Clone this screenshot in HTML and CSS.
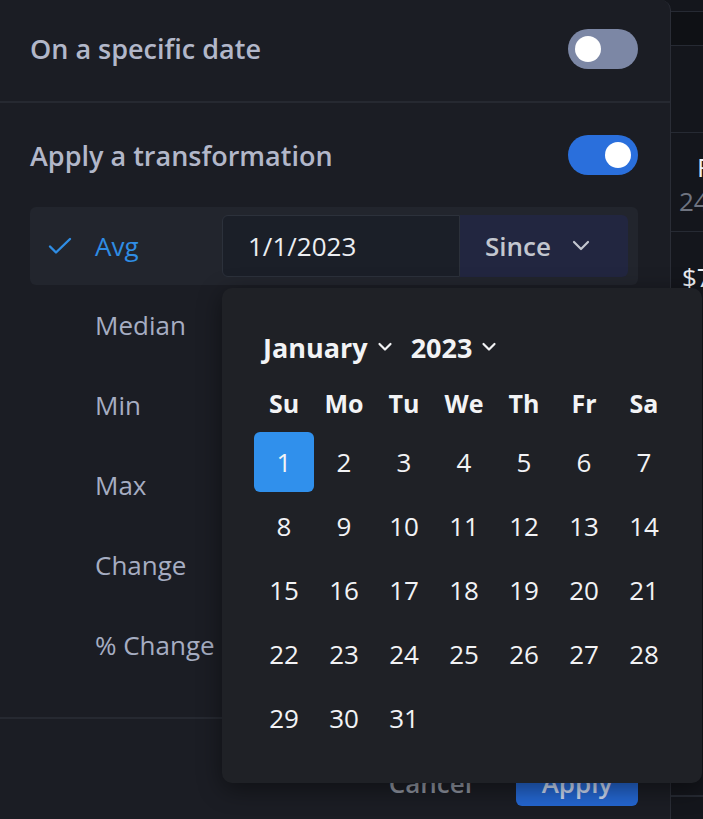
FILE: index.html
```html
<!DOCTYPE html>
<html lang="en">

<head>
    <meta charset="UTF-8">
    <meta name="viewport" content="width=device-width, initial-scale=1.0">
    <title>Metric settings</title>
    <link rel="stylesheet" href="styles.css">
</head>

<body>
    <div class="screen">
        <div class="panel">
            <div class="panel-head">
                <span class="label">On a specific date</span>
                <span class="toggle"><span class="knob"></span></span>
            </div>

            <div class="panel-body">
                <div class="body-title">
                    <span class="label">Apply a transformation</span>
                    <span class="toggle on"><span class="knob"></span></span>
                </div>

                <div class="agg-list">
                    <div class="agg active">
                        <span class="check">
                            <svg width="24" height="20" viewBox="0 0 24 20" fill="none">
                                <path d="M2 10.5 L8 16.5 L22 3" stroke="#2f8de4" stroke-width="2.4"
                                    stroke-linecap="round" stroke-linejoin="round" />
                            </svg>
                        </span>
                        <span class="agg-name">Avg</span>
                        <div class="date-field">
                            <span class="date-input">1/1/2023</span>
                            <span class="date-mode">Since
                                <svg width="20" height="12" viewBox="0 0 20 12" fill="none">
                                    <path d="M3 2 L10 9 L17 2" stroke="#c3c6cf" stroke-width="2.2"
                                        stroke-linecap="round" stroke-linejoin="round" />
                                </svg>
                            </span>
                        </div>
                    </div>
                    <div class="agg"><span class="agg-name">Median</span></div>
                    <div class="agg"><span class="agg-name">Min</span></div>
                    <div class="agg"><span class="agg-name">Max</span></div>
                    <div class="agg"><span class="agg-name">Change</span></div>
                    <div class="agg"><span class="agg-name">% Change</span></div>
                </div>
            </div>

            <div class="panel-foot">
                <button class="btn-cancel">Cancel</button>
                <button class="btn-apply">Apply</button>
            </div>
        </div>

        <div class="side">
            <div class="side-row top"></div>
            <div class="side-row band"></div>
            <div class="side-row gap"></div>
            <div class="side-row cell">
                <span class="side-title">F</span>
                <span class="side-sub">24</span>
            </div>
            <div class="side-row cell tall">
                <span class="side-title">$7</span>
            </div>
            <div class="side-row"></div>
        </div>

        <div class="calendar">
            <div class="cal-head">
                <span class="cal-pick">January
                    <svg width="16" height="10" viewBox="0 0 16 10" fill="none">
                        <path d="M2.5 2 L8 7.5 L13.5 2" stroke="#f2f3f5" stroke-width="2.2"
                            stroke-linecap="round" stroke-linejoin="round" />
                    </svg>
                </span>
                <span class="cal-pick">2023
                    <svg width="16" height="10" viewBox="0 0 16 10" fill="none">
                        <path d="M2.5 2 L8 7.5 L13.5 2" stroke="#f2f3f5" stroke-width="2.2"
                            stroke-linecap="round" stroke-linejoin="round" />
                    </svg>
                </span>
            </div>
            <div class="cal-week">
                <span>Su</span><span>Mo</span><span>Tu</span><span>We</span><span>Th</span><span>Fr</span><span>Sa</span>
            </div>
            <div class="cal-days">
                <span class="day selected">1</span><span class="day">2</span><span class="day">3</span><span class="day">4</span><span class="day">5</span><span class="day">6</span><span class="day">7</span>
                <span class="day">8</span><span class="day">9</span><span class="day">10</span><span class="day">11</span><span class="day">12</span><span class="day">13</span><span class="day">14</span>
                <span class="day">15</span><span class="day">16</span><span class="day">17</span><span class="day">18</span><span class="day">19</span><span class="day">20</span><span class="day">21</span>
                <span class="day">22</span><span class="day">23</span><span class="day">24</span><span class="day">25</span><span class="day">26</span><span class="day">27</span><span class="day">28</span>
                <span class="day">29</span><span class="day">30</span><span class="day">31</span>
            </div>
        </div>
    </div>
</body>

</html>
```

FILE: styles.css
```css
* {
    box-sizing: border-box;
}

body {
    margin: 0;
    background-color: #14161c;
    font-family: "Open Sans", "Noto Sans", sans-serif;
    overflow: hidden;
}

.screen {
    position: relative;
    display: flex;
    width: 703px;
    height: 819px;
    overflow: hidden;
}

/* left settings panel */

.panel {
    width: 671px;
    flex-shrink: 0;
    background-color: #1b1d24;
    border-right: 1px solid #2a2d36;
    border-top-right-radius: 10px;
    display: flex;
    flex-direction: column;
}

.label {
    color: #b2b7c9;
    font-size: 27px;
    font-weight: 600;
}

.panel-head {
    height: 103px;
    padding: 29px 32px 0 30px;
    display: flex;
    justify-content: space-between;
    align-items: flex-start;
    border-bottom: 2px solid #262931;
}

.panel-head .label {
    line-height: 40px;
}

.panel-body {
    padding: 32px 32px 32px 30px;
    border-bottom: 2px solid #262931;
}

.body-title {
    display: flex;
    justify-content: space-between;
    align-items: center;
    height: 40px;
    margin-bottom: 32px;
}

.toggle {
    position: relative;
    width: 70px;
    height: 40px;
    border-radius: 20px;
    background-color: #7c87a5;
}

.toggle .knob {
    position: absolute;
    top: 7px;
    left: 7px;
    width: 26px;
    height: 26px;
    border-radius: 50%;
    background-color: white;
}

.toggle.on {
    background-color: #2a6fdc;
}

.toggle.on .knob {
    left: auto;
    right: 7px;
}

.agg {
    height: 80px;
    display: flex;
    align-items: center;
    padding-left: 65px;
}

.agg-name {
    color: #a6adc2;
    font-size: 26px;
}

.agg.active {
    height: 78px;
    padding: 0 10px 0 18px;
    background-color: #22252d;
    border-radius: 6px;
}

.agg.active .agg-name {
    color: #2f8de4;
    width: 127px;
}

.check {
    display: flex;
    width: 47px;
}

.date-field {
    display: flex;
    height: 62px;
    flex: 1;
}

.date-input {
    width: 238px;
    display: flex;
    align-items: center;
    padding-left: 25px;
    background-color: #1b1f28;
    border: 1px solid #2c313b;
    border-radius: 6px 0 0 6px;
    color: #eceef2;
    font-size: 26px;
}

.date-mode {
    flex: 1;
    display: flex;
    align-items: center;
    gap: 20px;
    padding-left: 25px;
    background-color: #222640;
    border-radius: 0 6px 6px 0;
    color: #c3c6cf;
    font-size: 26px;
    font-weight: 600;
}

.panel-foot {
    display: flex;
    justify-content: flex-end;
    align-items: center;
    gap: 38px;
    padding: 41px 32px 0 0;
}

.panel-foot button {
    font-family: inherit;
    font-size: 26px;
    font-weight: 600;
    border: none;
}

.btn-cancel {
    background: none;
    color: #8d929e;
}

.btn-apply {
    width: 122px;
    height: 46px;
    background-color: #2466d0;
    color: #c9d6ee;
    border-radius: 6px;
}

/* right table strip */

.side {
    flex: 1;
    display: flex;
    flex-direction: column;
    overflow: hidden;
}

.side-row {
    border-bottom: 1px solid #262a33;
    position: relative;
    white-space: nowrap;
}

.side-row.top {
    height: 12px;
}

.side-row.band {
    height: 34px;
    background-color: #0f1115;
}

.side-row.gap {
    height: 87px;
}

.side-row.cell {
    height: 99px;
    padding: 17px 0 0 26px;
    display: flex;
    flex-direction: column;
    line-height: 34px;
}

.side-row.tall {
    height: 564px;
    padding-top: 28px;
    padding-left: 11px;
}

.side-title {
    color: #eceef2;
    font-size: 26px;
}

.side-sub {
    color: #6f7480;
    font-size: 26px;
    margin-left: -18px;
}

/* date picker popover */

.calendar {
    position: absolute;
    left: 222px;
    top: 288px;
    width: 480px;
    height: 495px;
    padding: 39px 28px 0 32px;
    background-color: #1f2126;
    border-radius: 10px;
    box-shadow: 0 6px 24px rgba(0, 0, 0, 0.45);
    color: #f2f3f5;
}

.cal-head {
    display: flex;
    gap: 18px;
    height: 40px;
    align-items: center;
    padding-left: 9px;
}

.cal-pick {
    display: flex;
    align-items: center;
    gap: 9px;
    font-size: 27px;
    font-weight: 700;
}

.cal-week,
.cal-days {
    display: grid;
    grid-template-columns: repeat(7, 60px);
    text-align: center;
}

.cal-week {
    height: 40px;
    margin-top: 16px;
    margin-bottom: 9px;
    align-items: center;
    font-size: 25px;
    font-weight: 700;
}

.cal-days {
    row-gap: 4px;
}

.day {
    height: 60px;
    line-height: 60px;
    font-size: 26px;
    border-radius: 6px;
}

.day.selected {
    background-color: #3090ec;
}
```
